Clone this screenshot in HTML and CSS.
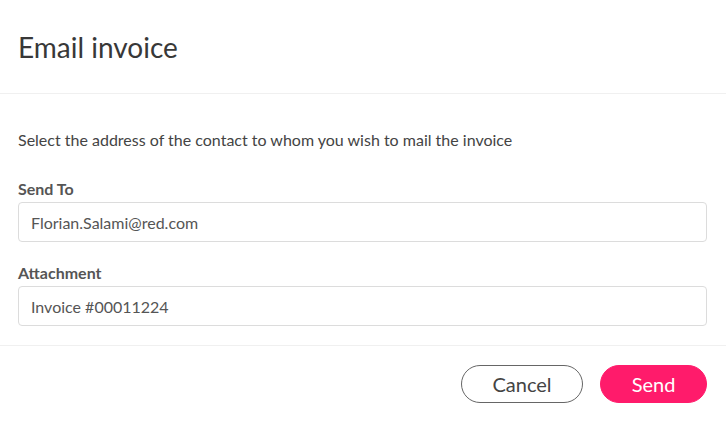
FILE: index.html
```html
<!DOCTYPE html>
<html lang="en">
<head>
<meta charset="utf-8">
<title>Email invoice</title>
<link rel="stylesheet" href="styles.css">
</head>
<body>
<div class="dialog">
  <div class="dialog-header">
    <h1 class="dialog-title">Email invoice</h1>
  </div>
  <div class="dialog-body">
    <p class="intro">Select the address of the contact to whom you wish to mail the invoice</p>
    <div class="field">
      <label class="field-label">Send To</label>
      <div class="field-input">Florian.Salami@red.com</div>
    </div>
    <div class="field">
      <label class="field-label">Attachment</label>
      <div class="field-input">Invoice #00011224</div>
    </div>
  </div>
  <div class="dialog-footer">
    <button class="btn btn-cancel">Cancel</button>
    <button class="btn btn-send">Send</button>
  </div>
</div>
</body>
</html>
```

FILE: styles.css
```css
* { box-sizing: border-box; }
html, body { margin: 0; padding: 0; background: #fff; }
body {
  font-family: Lato, "Open Sans", sans-serif;
  color: #444;
  width: 726px;
  height: 422px;
  overflow: hidden;
}
.dialog-header {
  height: 94px;
  padding: 0 18px;
  display: flex;
  align-items: center;
  border-bottom: 1px solid #f0f0f0;
}
.dialog-title {
  margin: 0;
  font-size: 28px;
  font-weight: 400;
  color: #383838;
  line-height: 34px;
}
.dialog-body {
  padding: 36px 19px 19px 18px;
}
.intro {
  margin: 0 0 29px;
  font-size: 16px;
  line-height: 20px;
  color: #444;
}
.field + .field { margin-top: 21px; }
.field-label {
  display: block;
  font-size: 16px;
  font-weight: 700;
  line-height: 20px;
  color: #555;
  margin-bottom: 3px;
}
.field-input {
  height: 40px;
  border: 1px solid #dcdcdc;
  border-radius: 4px;
  padding: 0 12px;
  display: flex;
  align-items: center;
  font-size: 16px;
  color: #555;
}
.dialog-footer {
  border-top: 1px solid #f0f0f0;
  padding: 19px 19px 0 18px;
  display: flex;
  justify-content: flex-end;
  gap: 17px;
}
.btn {
  height: 38px;
  border-radius: 19px;
  font-family: inherit;
  font-size: 20px;
  line-height: 1;
  padding: 0;
  cursor: pointer;
}
.btn-cancel {
  width: 122px;
  background: #fff;
  border: 1px solid #666;
  color: #444;
}
.btn-send {
  width: 107px;
  background: #ff1b6b;
  border: 1px solid #ff1b6b;
  color: #fff;
}
```
